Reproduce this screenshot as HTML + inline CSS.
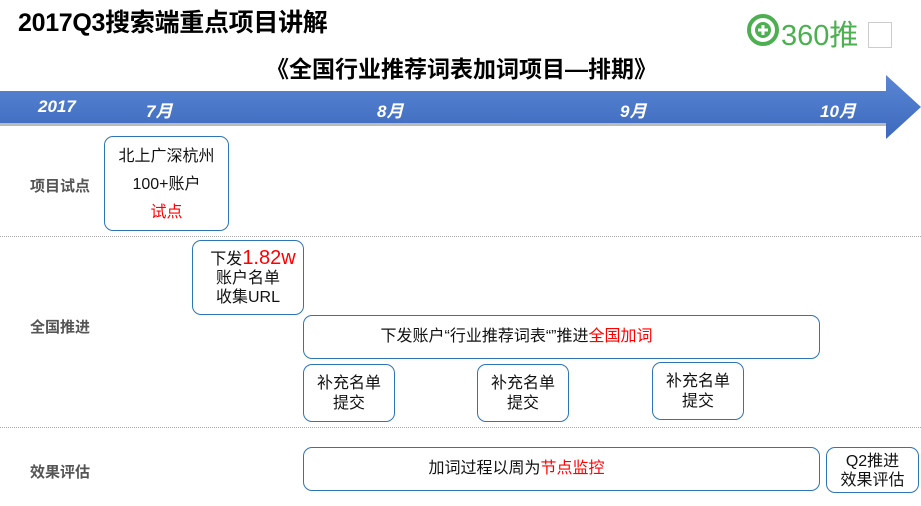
<!DOCTYPE html>
<html><head><meta charset="utf-8"><style>
body{margin:0;width:921px;height:506px;background:#fff;position:relative;overflow:hidden;font-family:"Liberation Sans","Noto Sans CJK SC",sans-serif;}
.a{position:absolute;}
.box{position:absolute;border:1.3px solid #2e75b6;border-radius:9px;box-sizing:border-box;text-align:center;color:#111;font-size:16px;}
.lab{position:absolute;left:30px;font-size:15px;font-weight:bold;color:#555;}
.m{position:absolute;top:97px;color:#fff;font-weight:bold;font-style:italic;font-size:17px;}
.sep{position:absolute;left:0;width:921px;border-top:1.5px dotted #aaa;}
.r{color:#f00}
</style></head><body>
<div class="a" style="left:18px;top:3px;font-size:25px;font-weight:bold;color:#000;letter-spacing:-0.3px">2017Q3搜索端重点项目讲解</div>
<div class="a" style="left:266px;top:50px;font-size:23px;font-weight:bold;color:#000">《全国行业推荐词表加词项目—排期》</div>
<svg class="a" style="left:746px;top:10px" width="34" height="40" viewBox="0 0 34 40"><circle cx="17" cy="20" r="14" fill="none" stroke="#4caf50" stroke-width="4"/><circle cx="17" cy="20" r="8" fill="#4caf50"/><rect x="15.5" y="15" width="3" height="10" fill="#fff"/><rect x="12" y="18.5" width="10" height="3" fill="#fff"/></svg>
<div class="a" style="left:781px;top:12px;font-size:29px;color:#4caf50">360推</div>
<div class="a" style="left:868px;top:22px;width:22px;height:24px;background:#fff;border:1px solid #ccc"></div>
<svg class="a" style="left:0;top:75px" width="921" height="70"><defs><linearGradient id="g" x1="0" y1="0" x2="0" y2="1"><stop offset="0" stop-color="#5a86d4"/><stop offset="1" stop-color="#3c69bd"/></linearGradient></defs><rect x="0" y="48" width="890" height="3" fill="#bbb"/><polygon points="0,16 886,16 886,0 921,32 886,64 886,48 0,48" fill="url(#g)"/></svg>
<div class="m" style="left:38px">2017</div>
<div class="m" style="left:146px">7月</div>
<div class="m" style="left:377px">8月</div>
<div class="m" style="left:620px">9月</div>
<div class="m" style="left:820px">10月</div>
<div class="sep" style="top:236px"></div>
<div class="sep" style="top:427px"></div>
<div class="lab" style="top:175px">项目试点</div>
<div class="lab" style="top:316px">全国推进</div>
<div class="lab" style="top:461px">效果评估</div>
<div class="box" style="left:104px;top:136px;width:125px;height:95px;line-height:28px;padding-top:6px">北上广深杭州<br>100+账户<br><span class="r">试点</span></div>
<div class="box" style="left:192px;top:240px;width:112px;height:75px;line-height:19px;padding-top:8px"><span style="margin-left:10px">下发</span><span class="r" style="font-size:20px">1.82w</span><br>账户名单<br>收集URL</div>
<div class="box" style="left:303px;top:315px;width:517px;height:44px;line-height:42px;padding-right:90px">下发账户“行业推荐词表“”推进<span class="r">全国加词</span></div>
<div class="box" style="left:303px;top:364px;width:92px;height:58px;line-height:20px;padding-top:9px">补充名单<br>提交</div>
<div class="box" style="left:477px;top:364px;width:92px;height:58px;line-height:20px;padding-top:9px">补充名单<br>提交</div>
<div class="box" style="left:652px;top:362px;width:92px;height:58px;line-height:20px;padding-top:9px">补充名单<br>提交</div>
<div class="box" style="left:303px;top:447px;width:517px;height:44px;line-height:42px;padding-right:90px">加词过程以周为<span class="r">节点监控</span></div>
<div class="box" style="left:826px;top:447px;width:93px;height:46px;line-height:19px;padding-top:4px">Q2推进<br>效果评估</div>
</body></html>
